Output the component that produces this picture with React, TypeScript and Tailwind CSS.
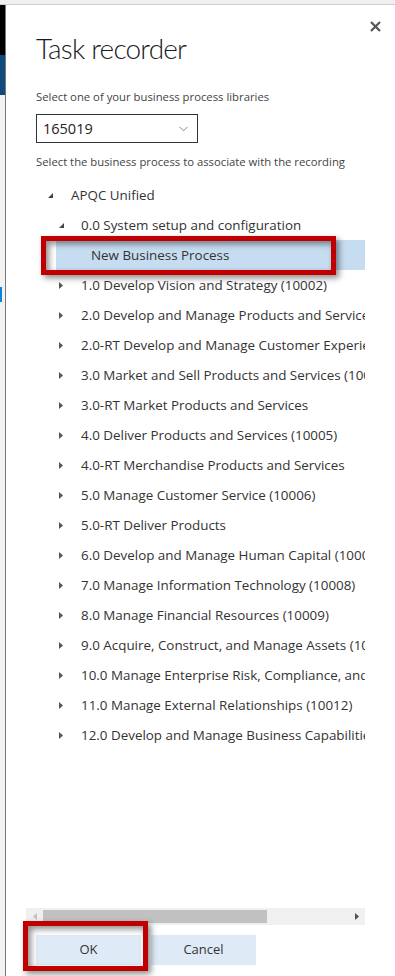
import React from "react";

const items: string[] = [
  "1.0 Develop Vision and Strategy (10002)",
  "2.0 Develop and Manage Products and Services (10003)",
  "2.0-RT Develop and Manage Customer Experience (10003)",
  "3.0 Market and Sell Products and Services (10004)",
  "3.0-RT Market Products and Services",
  "4.0 Deliver Products and Services (10005)",
  "4.0-RT Merchandise Products and Services",
  "5.0 Manage Customer Service (10006)",
  "5.0-RT Deliver Products",
  "6.0 Develop and Manage Human Capital (10007)",
  "7.0 Manage Information Technology (10008)",
  "8.0 Manage Financial Resources (10009)",
  "9.0 Acquire, Construct, and Manage Assets (10010)",
  "10.0 Manage Enterprise Risk, Compliance, and Resiliency (10011)",
  "11.0 Manage External Relationships (10012)",
  "12.0 Develop and Manage Business Capabilities (10013)",
];

function Expanded() {
  return (
    <svg width="5" height="5" viewBox="0 0 5 5" className="shrink-0">
      <polygon points="5,0 5,5 0,5" fill="#444" />
    </svg>
  );
}

function Collapsed() {
  return (
    <svg width="4" height="7" viewBox="0 0 4 7" className="shrink-0">
      <polygon points="0,0 4,3.5 0,7" fill="#555" />
    </svg>
  );
}

export default function App() {
  const font = { fontFamily: '"Segoe UI", "Open Sans", "Noto Sans", sans-serif' };
  return (
    <div className="w-[395px] h-[976px] flex flex-col bg-white overflow-hidden text-[#333]" style={font}>
      <div className="h-[5px] bg-[#f0f0f0] border-b border-[#cfcfcf] shrink-0" />
      <div className="flex flex-1 min-h-0">
        <div className="w-[5px] flex flex-col shrink-0">
          <div className="h-[50px] bg-black" />
          <div className="h-[40px] bg-[#104a7c]" />
          <div className="flex-1 bg-[#f2f2f2] flex flex-col">
            <div className="h-[192px]" />
            <div className="w-[2px] h-[15px] bg-[#0a84e0]" />
          </div>
        </div>
        <div className="w-[1px] bg-[#777] shrink-0" />
        <div className="flex-1 relative flex flex-col">
          <button className="absolute left-[364px] top-[16px] w-[11px] h-[11px]" aria-label="Close">
            <svg width="11" height="11" viewBox="0 0 11 11">
              <path d="M1 1 L10 10 M10 1 L1 10" stroke="#555" strokeWidth="2.2" />
            </svg>
          </button>
          <div className="pl-[30px] pt-[25px]">
            <div
              className="text-[28px] leading-[36px] font-light text-[#1a1a1a] tracking-[-0.8px]"
              style={{ fontFamily: 'Lato, "Open Sans", sans-serif' }}
            >
              Task recorder
            </div>
            <div className="mt-[23px] text-[11.3px] leading-[16px] text-[#444]">Select one of your business process libraries</div>
            <div className="mt-[9px] w-[162px] h-[29px] border border-[#333] flex items-center justify-between pl-[6px] pr-[9px]">
              <span className="text-[14.5px] text-[#222]">165019</span>
              <svg width="9" height="6" viewBox="0 0 9 6">
                <path d="M0.5 0.8 L4.5 4.8 L8.5 0.8" stroke="#888" strokeWidth="1" fill="none" />
              </svg>
            </div>
            <div className="mt-[11px] text-[11.3px] leading-[16px] text-[#444]">Select the business process to associate with the recording</div>
          </div>
          <div className="flex-1 min-h-0 flex flex-col pl-[20px]">
            <div className="mt-[10px] w-[339px] flex-1 relative overflow-hidden text-[13.4px]">
              <div className="h-[30px] flex items-center whitespace-nowrap">
                <div className="w-[22px] shrink-0" />
                <Expanded />
                <span className="ml-[18px] shrink-0">APQC Unified</span>
              </div>
              <div className="h-[30px] flex items-center whitespace-nowrap">
                <div className="w-[33px] shrink-0" />
                <Expanded />
                <span className="ml-[17px] shrink-0">0.0 System setup and configuration</span>
              </div>
              <div className="h-[30px] flex items-center whitespace-nowrap ml-[30px] bg-[#c6dcf0]">
                <span className="ml-[35px] shrink-0">New Business Process</span>
              </div>
              {items.map((t) => (
                <div key={t} className="h-[30px] flex items-center whitespace-nowrap">
                  <div className="w-[33px] shrink-0" />
                  <Collapsed />
                  <span className="ml-[18px] shrink-0">{t}</span>
                </div>
              ))}
              <div className="absolute left-[15px] top-[56px] w-[295px] h-[39px] border-[5px] border-[#c00000] shadow-[3px_3px_6px_rgba(0,0,0,0.45),inset_3px_3px_6px_rgba(0,0,0,0.45)]" />
            </div>
            <div className="w-[339px] h-[17px] bg-[#f0f0f0] flex items-center shrink-0">
              <div className="w-[17px] flex justify-center">
                <svg width="4" height="7" viewBox="0 0 4 7">
                  <polygon points="4,0 0,3.5 4,7" fill="#c2c2c2" />
                </svg>
              </div>
              <div className="w-[224px] h-[13px] bg-[#c1c1c1]" />
              <div className="flex-1" />
              <div className="w-[17px] flex justify-center">
                <svg width="4" height="7" viewBox="0 0 4 7">
                  <polygon points="0,0 4,3.5 0,7" fill="#505050" />
                </svg>
              </div>
            </div>
            <div className="relative mt-[10px] mb-[11px] flex gap-[10px] pl-[10px] shrink-0">
              <button className="w-[105px] h-[30px] bg-[#deebf7] text-[13px] text-[#333]">OK</button>
              <button className="w-[105px] h-[30px] bg-[#deebf7] text-[13px] text-[#333]">Cancel</button>
              <div className="absolute left-[-3px] top-[-14px] w-[125px] h-[50px] border-[5px] border-[#c00000] shadow-[3px_3px_6px_rgba(0,0,0,0.45),inset_3px_3px_6px_rgba(0,0,0,0.45)]" />
            </div>
          </div>
        </div>
      </div>
    </div>
  );
}
